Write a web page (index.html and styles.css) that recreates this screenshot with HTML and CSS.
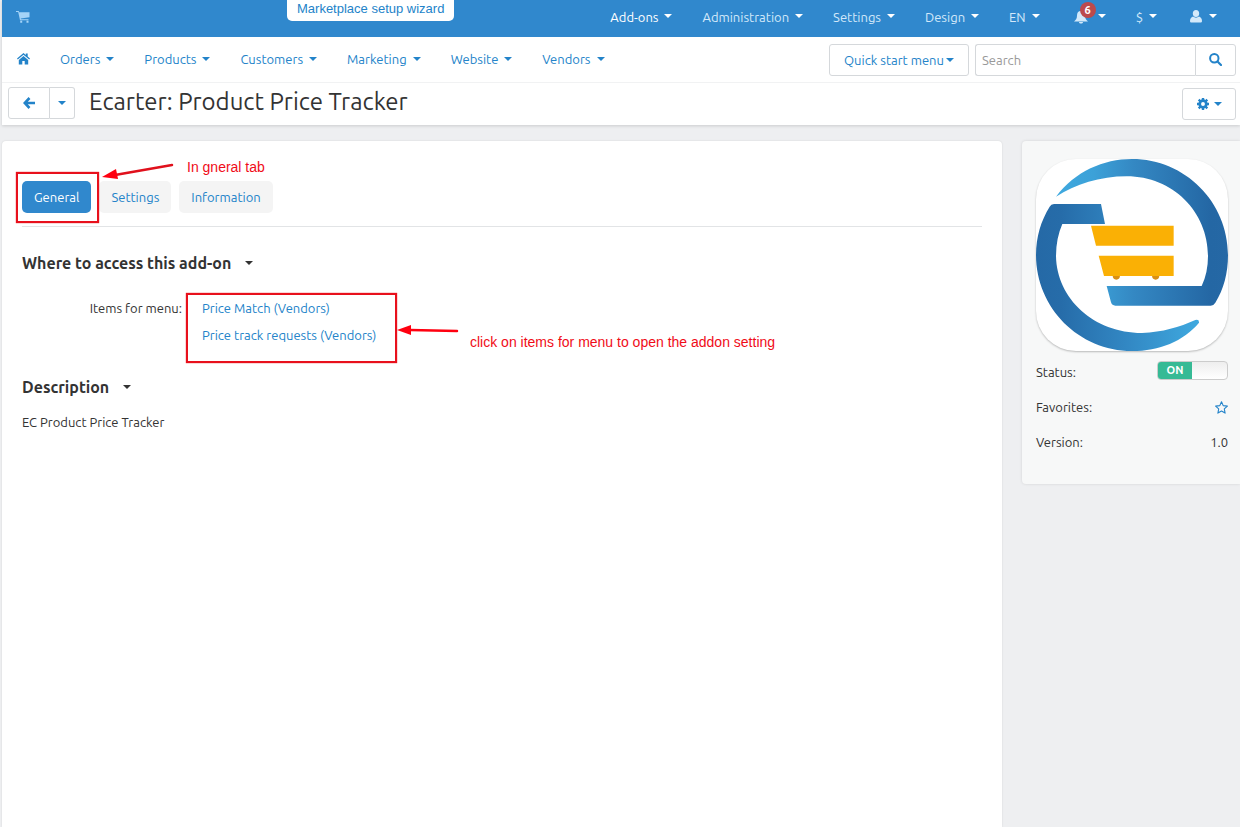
FILE: index.html
```html
<!DOCTYPE html>
<html lang="en">
<head>
	<meta charset="utf-8">
	<meta name="viewport" content="width=device-width, initial-scale=1">
	<title>Ecarter: Product Price Tracker</title>
	<link rel="stylesheet" href="styles.css">
</head>
<body>
	<header class="header">
		<div class="topbar">
			<a class="cart" href="#" aria-label="Storefront">
				<svg width="14" height="13" viewBox="0 0 14 13"><path fill="currentColor" d="M0 1h2.700l.5 1.300H13.500v5L4.700 8.400l.2.900h7.600v1H4L2.200 2H0zM4.200 10.700h2v2h-2zM10.500 10.700h2v2h-2z"/></svg>
			</a>
			<a class="wizard" href="#">Marketplace setup wizard</a>
			<ul class="menu topmenu">
				<li><a class="active" href="#">Add-ons <b class="caret"></b></a></li>
				<li><a href="#">Administration <b class="caret"></b></a></li>
				<li><a href="#">Settings <b class="caret"></b></a></li>
				<li><a href="#">Design <b class="caret"></b></a></li>
				<li><a href="#">EN <b class="caret"></b></a></li>
				<li><a class="bell" href="#" aria-label="Notifications">
					<svg width="14" height="14" viewBox="0 0 14 14"><path fill="currentColor" d="M7 1c3 0 4 2 4 4.500 0 3 1 4.500 3 6H0c2-1.500 3-3 3-6C3 3 4 1 7 1zM5 12h4c0 2-4 2-4 0z"/></svg>
					<span class="badge">6</span><b class="caret"></b></a></li>
				<li><a href="#">$ <b class="caret"></b></a></li>
				<li><a class="user" href="#" aria-label="Account">
					<svg width="12" height="13" viewBox="0 0 12 13"><path fill="currentColor" d="M6 0c2 0 3.200 1.500 3.200 3.500S8 7 6 7 2.800 5.500 2.800 3.500 4 0 6 0zM3 6.500c1.500 1.500 4.500 1.500 6 0 2 .5 3 2.500 3 4.500 0 1-.7 1.500-1.500 1.500h-9C.7 12.500 0 12 0 11c0-2 1-4 3-4.500z"/></svg>
					<b class="caret"></b></a></li>
			</ul>
		</div>
		<div class="navbar">
			<ul class="menu mainmenu">
				<li><a href="#" aria-label="Home">
					<svg width="13" height="12" viewBox="0 0 13 12"><path fill="currentColor" d="M6.500 3l4.700 4v4.500H7.700V8H5.300v3.500H1.800V7zM6.500 0l2.300 1.900V.6h1.900v3l2.300 2-.8.900L6.500 1.700.8 6.500 0 5.600z"/></svg></a></li>
				<li><a href="#">Orders <b class="caret"></b></a></li>
				<li><a href="#">Products <b class="caret"></b></a></li>
				<li><a href="#">Customers <b class="caret"></b></a></li>
				<li><a href="#">Marketing <b class="caret"></b></a></li>
				<li><a href="#">Website <b class="caret"></b></a></li>
				<li><a href="#">Vendors <b class="caret"></b></a></li>
			</ul>
			<button class="btn quick" type="button">Quick start menu<b class="caret"></b></button>
			<form class="search">
				<input type="text" placeholder="Search" aria-label="Search">
				<button class="btn" type="button" aria-label="Find">
					<svg width="13" height="13" viewBox="0 0 13 13"><circle cx="5.300" cy="5.300" r="4.200" fill="none" stroke="currentColor" stroke-width="2"/><path d="M8.500 8.500l3.500 3.500" stroke="currentColor" stroke-width="2.200" stroke-linecap="round"/></svg>
				</button>
			</form>
		</div>
		<div class="titlebar">
			<div class="btn-group">
				<button class="btn back" type="button" aria-label="Back">
					<svg width="12" height="12" viewBox="0 0 12 12"><path d="M6.500 1L1.700 6l4.800 5M2 6h10" fill="none" stroke="currentColor" stroke-width="2.600"/></svg>
				</button>
				<button class="btn more" type="button" aria-label="Recent pages"><b class="caret"></b></button>
			</div>
			<h1>Ecarter: Product Price Tracker</h1>
			<button class="btn gear" type="button" aria-label="Tools">
				<svg width="12" height="12" viewBox="0 0 12 12"><circle cx="6" cy="6" r="3.300" fill="none" stroke="currentColor" stroke-width="2.700"/><path d="M6 0v2.500M6 9.500V12M0 6h2.500M9.500 6H12M1.700 1.700l1.800 1.800M8.500 8.500l1.800 1.800M10.300 1.700L8.500 3.500M3.500 8.500l-1.800 1.800" stroke="currentColor" stroke-width="2.400"/></svg>
				<b class="caret"></b>
			</button>
		</div>
	</header>

	<div class="page">
		<main class="content">
			<div class="tabs">
				<button class="tab selected" type="button">General</button>
				<button class="tab" type="button">Settings</button>
				<button class="tab" type="button">Information</button>
			</div>

			<h2>Where to access this add-on <b class="caret"></b></h2>
			<div class="access">
				<span>Items for menu:</span>
				<div class="links">
					<a href="#">Price Match (Vendors)</a>
					<a href="#">Price track requests (Vendors)</a>
				</div>
			</div>

			<h2>Description <b class="caret"></b></h2>
			<p>EC Product Price Tracker</p>

			<!-- notes drawn over the page -->
			<div class="box box-tab"></div>
			<div class="box box-links"></div>
			<svg class="arrow arrow-tab" width="74" height="20" viewBox="0 0 74 20"><path d="M71 2L14 12" stroke="#e0101c" stroke-width="2.500" stroke-linecap="round"/><path d="M1 14L15 6l2 10z" fill="#ff0010"/></svg>
			<svg class="arrow arrow-links" width="62" height="14" viewBox="0 0 62 14"><path d="M60 8L13 7" stroke="#ff0010" stroke-width="2.500" stroke-linecap="round"/><path d="M0 7L14 2v10z" fill="#ff0010"/></svg>
			<span class="note note-tab">In gneral tab</span>
			<span class="note note-links">click on items for menu to open the addon setting</span>
		</main>

		<aside class="sidebar">
			<svg class="logo" viewBox="78 87 576 576" role="img" aria-label="Ecarter">
				<defs>
					<linearGradient id="upper" gradientUnits="userSpaceOnUse" x1="138" y1="0" x2="654" y2="0">
						<stop offset="0" stop-color="#3fa9df"/>
						<stop offset=".22" stop-color="#3ca1d8"/>
						<stop offset=".45" stop-color="#3488c3"/>
						<stop offset=".9" stop-color="#2467a4"/>
						<stop offset="1" stop-color="#2568a5"/>
					</linearGradient>
					<linearGradient id="lower" gradientUnits="userSpaceOnUse" x1="78" y1="0" x2="567" y2="0">
						<stop offset="0" stop-color="#2569a6"/>
						<stop offset=".15" stop-color="#266ca9"/>
						<stop offset=".55" stop-color="#3287c3"/>
						<stop offset="1" stop-color="#3fa9df"/>
					</linearGradient>
				</defs>
				<path fill="url(#upper)" d="M138 200C196 124 280 87 366 87C525 87 654 216 654 375C654 430 641 478 616 518Q611 527 602 527H316Q306 527 303 517L290 468H575Q594 428 594 378C594 245 488 139 350 139C270 139 196 163 138 200Z"/>
				<path fill="url(#lower)" d="M119 230Q123 222 132 222H273L285 282H157Q138 325 138 378C140 506 252 609 396 609C458 606 508 592 556 570Q568 567 567 578C520 634 448 663 366 663C207 663 78 534 78 375C78 320 93 272 119 230Z"/>
				<path fill="#d98f14" d="M308 436h22a11 13 0 0 1-22 0zM426 436h22a11 13 0 0 1-22 0z"/>
				<path fill="#fab005" d="M243 287H491V347H258zM266 377H491V438H282z"/>
			</svg>
			<div class="prop">
				<label for="status">Status:</label>
				<span class="switch">
					<input type="checkbox" id="status" checked>
					<span class="on">ON</span>
				</span>
			</div>
			<div class="prop">
				<span>Favorites:</span>
				<a href="#" aria-label="Add to favorites">
					<svg width="13" height="13" viewBox="0 0 13 13"><path fill="none" stroke="currentColor" stroke-width="1.100" stroke-linejoin="round" d="M6.500.8L8.200 4.600l4.200.5-3.100 2.800.8 4.200-3.600-2.100-3.600 2.100.8-4.200L.6 5.100l4.200-.5z"/></svg>
				</a>
			</div>
			<div class="prop">
				<span>Version:</span>
				<span>1.0</span>
			</div>
		</aside>
	</div>
</body>
</html>
```

FILE: styles.css
```css
* {
	box-sizing: border-box;
}
body {
	display: flex;
	flex-direction: column;
	min-height: 100vh;
	margin: 0;
	padding-left: 2px;
	background: #eeeff1;
	color: #333;
	font: 13px/20px Ubuntu, "Noto Sans", sans-serif;
}
a {
	color: #2383c9;
	text-decoration: none;
}
svg {
	flex: none;
}
.header {
	background: #fff;
	box-shadow: 0 1px 3px rgba(0, 0, 0, .15);
}
.caret {
	display: inline-block;
	flex: none;
	border-top: 4px solid;
	border-left: 4px solid transparent;
	border-right: 4px solid transparent;
}

/* top bar */
.topbar {
	display: flex;
	align-items: center;
	height: 37px;
	padding: 0 23px 4px 14px;
	background: #3088cd;
}
.cart {
	display: flex;
	width: 271px;
	color: #a4d3f7;
}
.wizard {
	align-self: flex-start;
	height: 21px;
	padding: 0 10px;
	border-radius: 0 0 5px 5px;
	background: #fff;
	font: 13px/18px "Liberation Sans", sans-serif;
}
.menu {
	display: flex;
	align-items: center;
	margin: 0;
	padding: 0;
	list-style: none;
}
.menu a {
	display: flex;
	align-items: center;
	gap: 6px;
}
.topmenu {
	gap: 30px;
	margin-left: auto;
}
.topmenu a {
	color: #d3e9fa;
}
.topmenu .active,
.topmenu .caret {
	color: #fff;
}
.topmenu .caret {
	margin-bottom: 2px;
}
.topmenu .bell {
	position: relative;
	padding-left: 4px;
	gap: 10px;
}
.topmenu .user {
	gap: 7px;
	padding-left: 3px;
}
.badge {
	position: absolute;
	left: 10px;
	top: -8px;
	width: 16px;
	height: 16px;
	border-radius: 8px;
	background: #bc4a4c;
	color: #fff;
	font-size: 11px;
	font-weight: bold;
	line-height: 16px;
	text-align: center;
}

/* main navigation */
.navbar {
	display: flex;
	align-items: center;
	height: 46px;
	padding: 0 4px 0 15px;
	border-bottom: 1px solid #f1f2f3;
}
.mainmenu {
	gap: 30px;
	margin-right: auto;
	padding-bottom: 2px;
}
.btn {
	display: flex;
	align-items: center;
	justify-content: center;
	height: 32px;
	padding: 0;
	border: 1px solid #d5d8db;
	border-radius: 3px;
	background: #fff;
	color: #2383c9;
	font: inherit;
}
.quick {
	gap: 2px;
	width: 140px;
	margin-right: 6px;
}
.search {
	display: flex;
}
.search input {
	width: 220px;
	height: 32px;
	padding: 0 6px;
	border: 1px solid #d5d8db;
	border-right: 0;
	border-radius: 3px 0 0 3px;
	font: inherit;
}
.search input::placeholder {
	color: #999;
}
.search .btn {
	width: 41px;
	border-radius: 0 3px 3px 0;
}

/* title */
.titlebar {
	display: flex;
	align-items: center;
	height: 42px;
	padding: 0 4px 0 6px;
}
.btn-group {
	display: flex;
	margin-bottom: 2px;
}
.back {
	width: 42px;
	border-radius: 3px 0 0 3px;
}
.more {
	width: 25px;
	border-left: 0;
	border-radius: 0 3px 3px 0;
}
h1 {
	margin: 0 auto 4px 14px;
	font-size: 24px;
	font-weight: normal;
	line-height: 32px;
}
.gear {
	gap: 5px;
	width: 54px;
}

/* page */
.page {
	display: grid;
	flex: 1;
	grid-template-columns: 1fr 218px;
	align-items: start;
	gap: 20px;
	padding-top: 16px;
}
.content {
	position: relative;
	align-self: stretch;
	padding: 40px 20px;
	border-radius: 4px 4px 0 0;
	background: #fff;
	box-shadow: 0 0 2px rgba(0, 0, 0, .12);
}
.tabs {
	display: flex;
	gap: 8px;
	padding-bottom: 13px;
	border-bottom: 1px solid #e2e4e6;
}
.tab {
	height: 32px;
	padding: 0 12px;
	border: 0;
	border-radius: 5px;
	background: #f4f4f4;
	color: #2383c9;
	font: inherit;
}
.tab.selected {
	background: #3088cd;
	color: #fff;
}
h2 {
	display: flex;
	align-items: center;
	gap: 14px;
	margin: 24px 0 23px;
	font-size: 16px;
	line-height: 24px;
}
.access {
	display: flex;
	gap: 20px;
	margin-bottom: 30px;
}
.access > span {
	width: 160px;
	text-align: right;
}
.links {
	display: flex;
	flex-direction: column;
	gap: 7px;
}
p {
	margin: -10px 0 0;
}

/* notes */
.box,
.arrow,
.note {
	position: absolute;
}
.box {
	border: 2px solid #e8101c;
	box-shadow: 0 0 1px #e8101c;
}
.box-tab {
	left: 14px;
	top: 31px;
	width: 83px;
	height: 51px;
}
.box-links {
	left: 184px;
	top: 152px;
	width: 211px;
	height: 70px;
}
.arrow-tab {
	left: 99px;
	top: 22px;
}
.arrow-links {
	left: 395px;
	top: 182px;
}
.note {
	color: #f00c18;
	font: 14px/18px "Liberation Sans", sans-serif;
	white-space: nowrap;
}
.note-tab {
	left: 185px;
	top: 17px;
}
.note-links {
	left: 468px;
	top: 192px;
}

/* sidebar */
.sidebar {
	display: flex;
	flex-direction: column;
	gap: 15px;
	padding: 18px 12px 32px 14px;
	border-radius: 4px 0 0 4px;
	background: #f7f8f8;
	box-shadow: 0 0 3px rgba(0, 0, 0, .12);
}
.logo {
	display: block;
	width: 100%;
	margin-bottom: -5px;
	border-radius: 40px;
	background: #fff;
	box-shadow: 0 1px 2px rgba(0, 0, 0, .25);
}
.prop {
	display: flex;
	align-items: center;
	justify-content: space-between;
}
.prop a {
	display: flex;
}
.switch {
	position: relative;
	width: 71px;
	height: 19px;
	margin-bottom: 2px;
	overflow: hidden;
	border: 1px solid #ccc;
	border-radius: 4px;
	background: linear-gradient(#eee, #fff);
}
.switch input {
	position: absolute;
	inset: 0;
	width: 100%;
	height: 100%;
	margin: 0;
	opacity: 0;
}
.on {
	display: block;
	width: 34px;
	background: #36ba95;
	color: #fff;
	font-size: 11px;
	font-weight: bold;
	line-height: 17px;
	text-align: center;
}
```
